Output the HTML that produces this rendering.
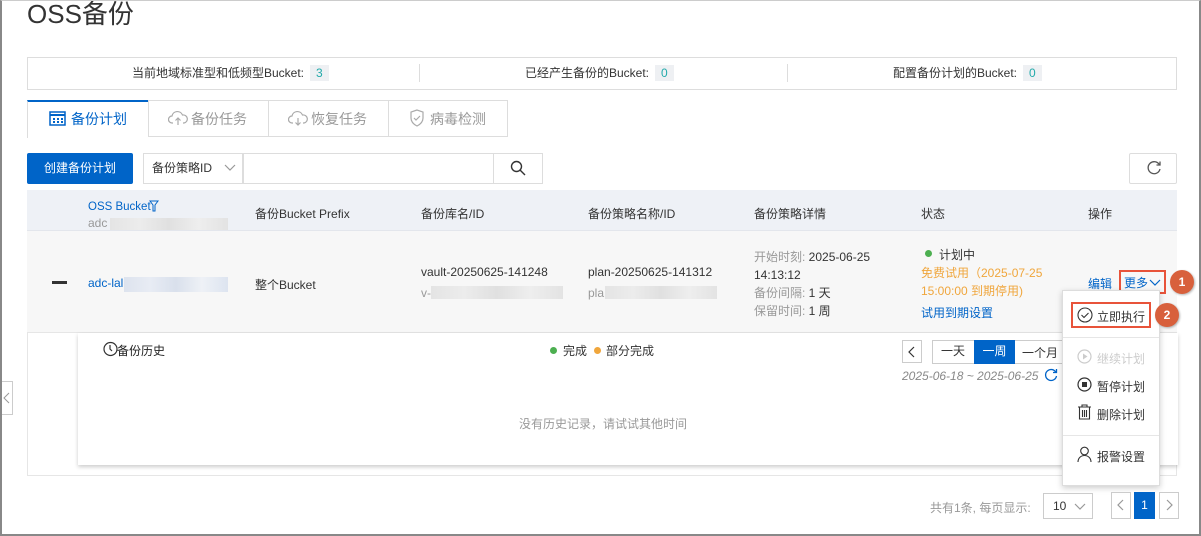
<!DOCTYPE html>
<html><head><meta charset="utf-8"><style>
*{box-sizing:border-box;margin:0;padding:0}
body{width:1201px;height:536px;overflow:hidden;background:#fff;font-family:"Liberation Sans","Noto Sans CJK SC",sans-serif;font-size:12px;color:#333;position:relative}
.a{position:absolute;white-space:nowrap}
.frame{position:absolute;left:0;top:0;width:1201px;height:536px;border-left:2px solid #888;border-right:2px solid #888;border-bottom:2px solid #888;border-top:1px solid #ccc}
.blue{color:#0064c8}
.gray{color:#999}
.blur{background:linear-gradient(90deg,#dde3ee,#e8ecf4,#d9e0ec,#eef1f6,#dde4f0);height:13px}
.blurg{background:linear-gradient(90deg,#e4e4e4,#ececec,#e0e0e0,#eeeeee,#e3e3e3);height:13px}
</style></head><body>
<div class="a" style="left:27px;top:-6px;font-size:26px;color:#333">OSS备份</div>

<div class="a" style="left:27px;top:57px;width:1150px;height:33px;border:1px solid #ddd"></div>
<div class="a" style="left:132px;top:65px;line-height:16px">当前地域标准型和低频型Bucket:<span style="display:inline-block;background:#eef0f3;color:#2aa;padding:0 6px;margin-left:6px">3</span></div>
<div class="a" style="left:419px;top:64px;width:1px;height:18px;background:#ddd"></div>
<div class="a" style="left:525px;top:65px;line-height:16px">已经产生备份的Bucket:<span style="display:inline-block;background:#eef0f3;color:#2aa;padding:0 6px;margin-left:6px">0</span></div>
<div class="a" style="left:787px;top:64px;width:1px;height:18px;background:#ddd"></div>
<div class="a" style="left:893px;top:65px;line-height:16px">配置备份计划的Bucket:<span style="display:inline-block;background:#eef0f3;color:#2aa;padding:0 6px;margin-left:6px">0</span></div>

<!-- tabs -->
<div class="a" style="left:27px;top:100px;width:121px;height:38px;border-top:2px solid #0064c8;border-left:1px solid #ddd;background:#fff"></div>
<div class="a" style="left:148px;top:100px;width:360px;height:37px;border:1px solid #ddd"></div>
<div class="a" style="left:268px;top:100px;width:1px;height:37px;background:#ddd"></div>
<div class="a" style="left:388px;top:100px;width:1px;height:37px;background:#ddd"></div>
<svg class="a" style="left:49px;top:110px" width="17" height="16" viewBox="0 0 17 16"><rect x="1" y="2" width="15" height="13" fill="none" stroke="#0064c8" stroke-width="1.5"/><path d="M1 5h15" stroke="#0064c8" stroke-width="2"/><g fill="#0064c8"><rect x="4" y="8" width="2" height="2"/><rect x="8" y="8" width="2" height="2"/><rect x="12" y="8" width="2" height="2"/><rect x="4" y="11" width="2" height="2"/><rect x="8" y="11" width="2" height="2"/><rect x="12" y="11" width="2" height="2"/></g></svg>
<div class="a blue" style="left:71px;top:109px;font-size:14px">备份计划</div>
<svg class="a" style="left:168px;top:110px" width="20" height="16" viewBox="0 0 20 16" fill="none" stroke="#aaa" stroke-width="1.2"><path d="M5 13H4a3.5 3.5 0 0 1 0-7 5.5 5.5 0 0 1 10.5-1A4 4 0 0 1 16 13h-1"/><path d="M10 15V8M7.5 10.5 10 8l2.5 2.5"/></svg>
<div class="a" style="left:191px;top:109px;font-size:14px;color:#999">备份任务</div>
<svg class="a" style="left:288px;top:110px" width="20" height="16" viewBox="0 0 20 16" fill="none" stroke="#aaa" stroke-width="1.2"><path d="M5 13H4a3.5 3.5 0 0 1 0-7 5.5 5.5 0 0 1 10.5-1A4 4 0 0 1 16 13h-1"/><path d="M10 8v7M7.5 12.5 10 15l2.5-2.5"/></svg>
<div class="a" style="left:311px;top:109px;font-size:14px;color:#999">恢复任务</div>
<svg class="a" style="left:409px;top:109px" width="16" height="18" viewBox="0 0 16 18" fill="none" stroke="#aaa" stroke-width="1.2"><path d="M8 1 2 3v6c0 4 3 6.5 6 8 3-1.5 6-4 6-8V3z"/><path d="M5 9l2 2 4-4"/></svg>
<div class="a" style="left:430px;top:109px;font-size:14px;color:#999">病毒检测</div>

<!-- toolbar -->
<div class="a" style="left:27px;top:153px;width:106px;height:31px;background:#0064c8;border-radius:2px;color:#fff;text-align:center;line-height:31px">创建备份计划</div>
<div class="a" style="left:143px;top:153px;width:100px;height:31px;border:1px solid #ddd;line-height:29px;padding-left:8px">备份策略ID</div>
<svg class="a" style="left:224px;top:164px" width="12" height="8"><path d="M1 1l5 5 5-5" fill="none" stroke="#999" stroke-width="1.2"/></svg>
<div class="a" style="left:243px;top:153px;width:251px;height:31px;border:1px solid #ddd"></div>
<div class="a" style="left:493px;top:153px;width:50px;height:31px;border:1px solid #ddd"></div>
<svg class="a" style="left:510px;top:160px" width="16" height="16" fill="none" stroke="#333" stroke-width="1.4"><circle cx="6.5" cy="6.5" r="5"/><path d="M10 10l5 5"/></svg>
<div class="a" style="left:1129px;top:153px;width:48px;height:31px;border:1px solid #ddd;border-radius:2px"></div>
<svg class="a" style="left:1146px;top:160px" width="16" height="16" fill="none" stroke="#555" stroke-width="1.3"><path d="M13.5 5A6 6 0 1 0 14 9"/><path d="M14 1.5V5h-3.5"/></svg>

<!-- table header -->
<div class="a" style="left:27px;top:190px;width:1150px;height:41px;background:#eef1f6;border-bottom:1px solid #e3e6ec"></div>
<div class="a blue" style="left:88px;top:201px;font-size:11.5px">OSS Bucket</div>
<svg class="a" style="left:149px;top:200px" width="10" height="12" fill="none" stroke="#0064c8"><path d="M1 1h8L6 5v6H4V5z"/></svg>
<div class="a gray" style="left:88px;top:216px">adc</div><div class="a blurg" style="left:110px;top:218px;width:118px;height:12px"></div>
<div class="a" style="left:255px;top:205px">备份Bucket Prefix</div>
<div class="a" style="left:421px;top:205px">备份库名/ID</div>
<div class="a" style="left:588px;top:205px">备份策略名称/ID</div>
<div class="a" style="left:754px;top:205px">备份策略详情</div>
<div class="a" style="left:921px;top:205px">状态</div>
<div class="a" style="left:1088px;top:205px">操作</div>

<!-- row -->
<div class="a" style="left:27px;top:231px;width:1150px;height:102px;background:#f7f7f7;border-bottom:1px solid #e6e6e6"></div>
<div class="a" style="left:52px;top:281px;width:15px;height:3px;background:#333"></div>
<div class="a blue" style="left:88px;top:276px">adc-lal</div><div class="a blur" style="left:124px;top:277px;width:104px;height:15px"></div>
<div class="a" style="left:255px;top:276px">整个Bucket</div>
<div class="a" style="left:421px;top:265px">vault-20250625-141248</div>
<div class="a gray" style="left:421px;top:286px">v-</div><div class="a blurg" style="left:431px;top:286px;width:132px"></div>
<div class="a" style="left:588px;top:265px">plan-20250625-141312</div>
<div class="a gray" style="left:588px;top:286px">pla</div><div class="a blurg" style="left:605px;top:286px;width:112px"></div>
<div class="a" style="left:754px;top:248px;line-height:18px"><span class="gray">开始时刻: </span>2025-06-25<br>14:13:12<br><span class="gray">备份间隔: </span>1 天<br><span class="gray">保留时间: </span>1 周</div>
<div class="a" style="left:925px;top:250px;width:7px;height:7px;border-radius:50%;background:#4caf50"></div>
<div class="a" style="left:921px;top:246px;line-height:18px;padding-left:18px">计划中</div>
<div class="a" style="left:921px;top:264px;line-height:18px;color:#f0a63c">免费试用（2025-07-25<br>15:00:00 到期停用)</div>
<div class="a blue" style="left:921px;top:304px">试用到期设置</div>
<div class="a blue" style="left:1088px;top:275px">编辑</div>
<div class="a blue" style="left:1124px;top:274px">更多</div>
<svg class="a" style="left:1149px;top:279px" width="12" height="8"><path d="M1 1l5 5 5-5" fill="none" stroke="#0064c8" stroke-width="1.2"/></svg>
<div class="a" style="left:1119px;top:270px;width:47px;height:24px;border:2px solid #e8533a"></div>
<div class="a" style="left:1170px;top:270px;width:24px;height:24px;border-radius:50%;background:#d8603c;color:#fff;font-weight:bold;text-align:center;line-height:24px;box-shadow:1px 1px 2px rgba(0,0,0,.3)">1</div>

<!-- expanded -->
<div class="a" style="left:27px;top:333px;width:1150px;height:143px;border-left:1px solid #e6e6e6;border-right:1px solid #e6e6e6;border-bottom:1px solid #e6e6e6"></div>
<div class="a" style="left:78px;top:333px;width:1100px;height:132px;background:#fff;box-shadow:0 2px 4px rgba(0,0,0,.2)"></div>
<svg class="a" style="left:103px;top:340px" width="15" height="17" fill="none" stroke="#333" stroke-width="1.2"><circle cx="7.5" cy="9" r="6.5"/><path d="M7 5v4l2 2"/></svg>
<div class="a" style="left:117px;top:342px;color:#222">备份历史</div>
<div class="a" style="left:550px;top:347px;width:7px;height:7px;border-radius:50%;background:#4caf50"></div>
<div class="a" style="left:563px;top:342px">完成</div>
<div class="a" style="left:594px;top:347px;width:7px;height:7px;border-radius:50%;background:#f0a63c"></div>
<div class="a" style="left:606px;top:342px">部分完成</div>
<div class="a gray" style="left:519px;top:415px">没有历史记录，请试试其他时间</div>
<div class="a" style="left:902px;top:340px;width:20px;height:23px;border:1px solid #ccc"></div>
<svg class="a" style="left:908px;top:346px" width="8" height="12"><path d="M6 1L1 6l5 5" fill="none" stroke="#333" stroke-width="1.2"/></svg>
<div class="a" style="left:932px;top:340px;width:140px;height:24px;border:1px solid #ccc"></div>
<div class="a" style="left:932px;top:340px;width:42px;height:24px;text-align:center;line-height:23px">一天</div>
<div class="a" style="left:974px;top:340px;width:41px;height:24px;background:#0064c8;color:#fff;text-align:center;line-height:23px">一周</div>
<div class="a" style="left:1022px;top:344px">一个月</div>
<div class="a" style="left:902px;top:369px;color:#888;font-style:italic">2025-06-18 ~ 2025-06-25</div>
<svg class="a" style="left:1044px;top:368px" width="14" height="14" fill="none" stroke="#0064c8" stroke-width="1.3"><path d="M12 4.5A5.5 5.5 0 1 0 12.5 8"/><path d="M12.5 1v3.5H9"/></svg>

<!-- menu -->
<div class="a" style="left:1062px;top:290px;width:98px;height:196px;background:#fff;border:1px solid #ddd;box-shadow:0 2px 6px rgba(0,0,0,.2)"></div>
<svg class="a" style="left:1077px;top:307px" width="16" height="16" fill="none" stroke="#333" stroke-width="1.1"><circle cx="8" cy="8" r="7"/><path d="M4.5 8l2.5 2.5 4.5-4.5"/></svg>
<div class="a" style="left:1097px;top:308px">立即执行</div>
<div class="a" style="left:1071px;top:302px;width:80px;height:26px;border:2px solid #e8533a"></div>
<div class="a" style="left:1155px;top:303px;width:24px;height:24px;border-radius:50%;background:#d8603c;color:#fff;font-weight:bold;text-align:center;line-height:24px;box-shadow:1px 1px 2px rgba(0,0,0,.3)">2</div>
<div class="a" style="left:1063px;top:337px;width:96px;height:1px;background:#e6e6e6"></div>
<svg class="a" style="left:1077px;top:349px" width="15" height="15"><circle cx="7.5" cy="7.5" r="6.5" fill="none" stroke="#ccc" stroke-width="1.2"/><path d="M6 4.5v6l4.5-3z" fill="#ccc"/></svg>
<div class="a" style="left:1097px;top:350px;color:#ccc">继续计划</div>
<svg class="a" style="left:1077px;top:377px" width="15" height="15"><circle cx="7.5" cy="7.5" r="6.5" fill="none" stroke="#333" stroke-width="1.2"/><rect x="5" y="5" width="5" height="5" fill="#333"/></svg>
<div class="a" style="left:1097px;top:378px">暂停计划</div>
<svg class="a" style="left:1077px;top:404px" width="15" height="16" fill="none" stroke="#333" stroke-width="1.1"><path d="M1 3h13M5 3V1h5v2M2.5 3v12h10V3M5.5 6v7M7.5 6v7M9.5 6v7"/></svg>
<div class="a" style="left:1097px;top:406px">删除计划</div>
<div class="a" style="left:1063px;top:435px;width:96px;height:1px;background:#e6e6e6"></div>
<svg class="a" style="left:1077px;top:446px" width="15" height="16" fill="none" stroke="#333" stroke-width="1.1"><circle cx="7.5" cy="5" r="3.8"/><path d="M1 16c0-4 3-6.5 6.5-6.5S14 12 14 16"/></svg>
<div class="a" style="left:1097px;top:448px">报警设置</div>

<!-- left tab -->
<div class="a" style="left:0;top:381px;width:13px;height:34px;border:1px solid #ccc;border-left:none;background:#fff"></div>
<svg class="a" style="left:3px;top:392px" width="7" height="12"><path d="M6 1L1 6l5 5" fill="none" stroke="#999"/></svg>

<!-- pagination -->
<div class="a gray" style="left:930px;top:499px">共有1条, 每页显示:</div>
<div class="a" style="left:1043px;top:493px;width:50px;height:26px;border:1px solid #ccc;padding-left:9px;line-height:25px">10</div>
<svg class="a" style="left:1074px;top:503px" width="12" height="8"><path d="M1 1l5 5 5-5" fill="none" stroke="#999" stroke-width="1.2"/></svg>
<div class="a" style="left:1111px;top:492px;width:20px;height:27px;border:1px solid #ccc"></div>
<svg class="a" style="left:1117px;top:499px" width="8" height="12"><path d="M6 1L1 6l5 5" fill="none" stroke="#999" stroke-width="1.2"/></svg>
<div class="a" style="left:1134px;top:492px;width:21px;height:27px;background:#0064c8;color:#fff;text-align:center;line-height:27px">1</div>
<div class="a" style="left:1159px;top:492px;width:20px;height:27px;border:1px solid #ccc"></div>
<svg class="a" style="left:1166px;top:499px" width="8" height="12"><path d="M1 1l5 5-5 5" fill="none" stroke="#999" stroke-width="1.2"/></svg>

<div class="frame"></div>
</body></html>
